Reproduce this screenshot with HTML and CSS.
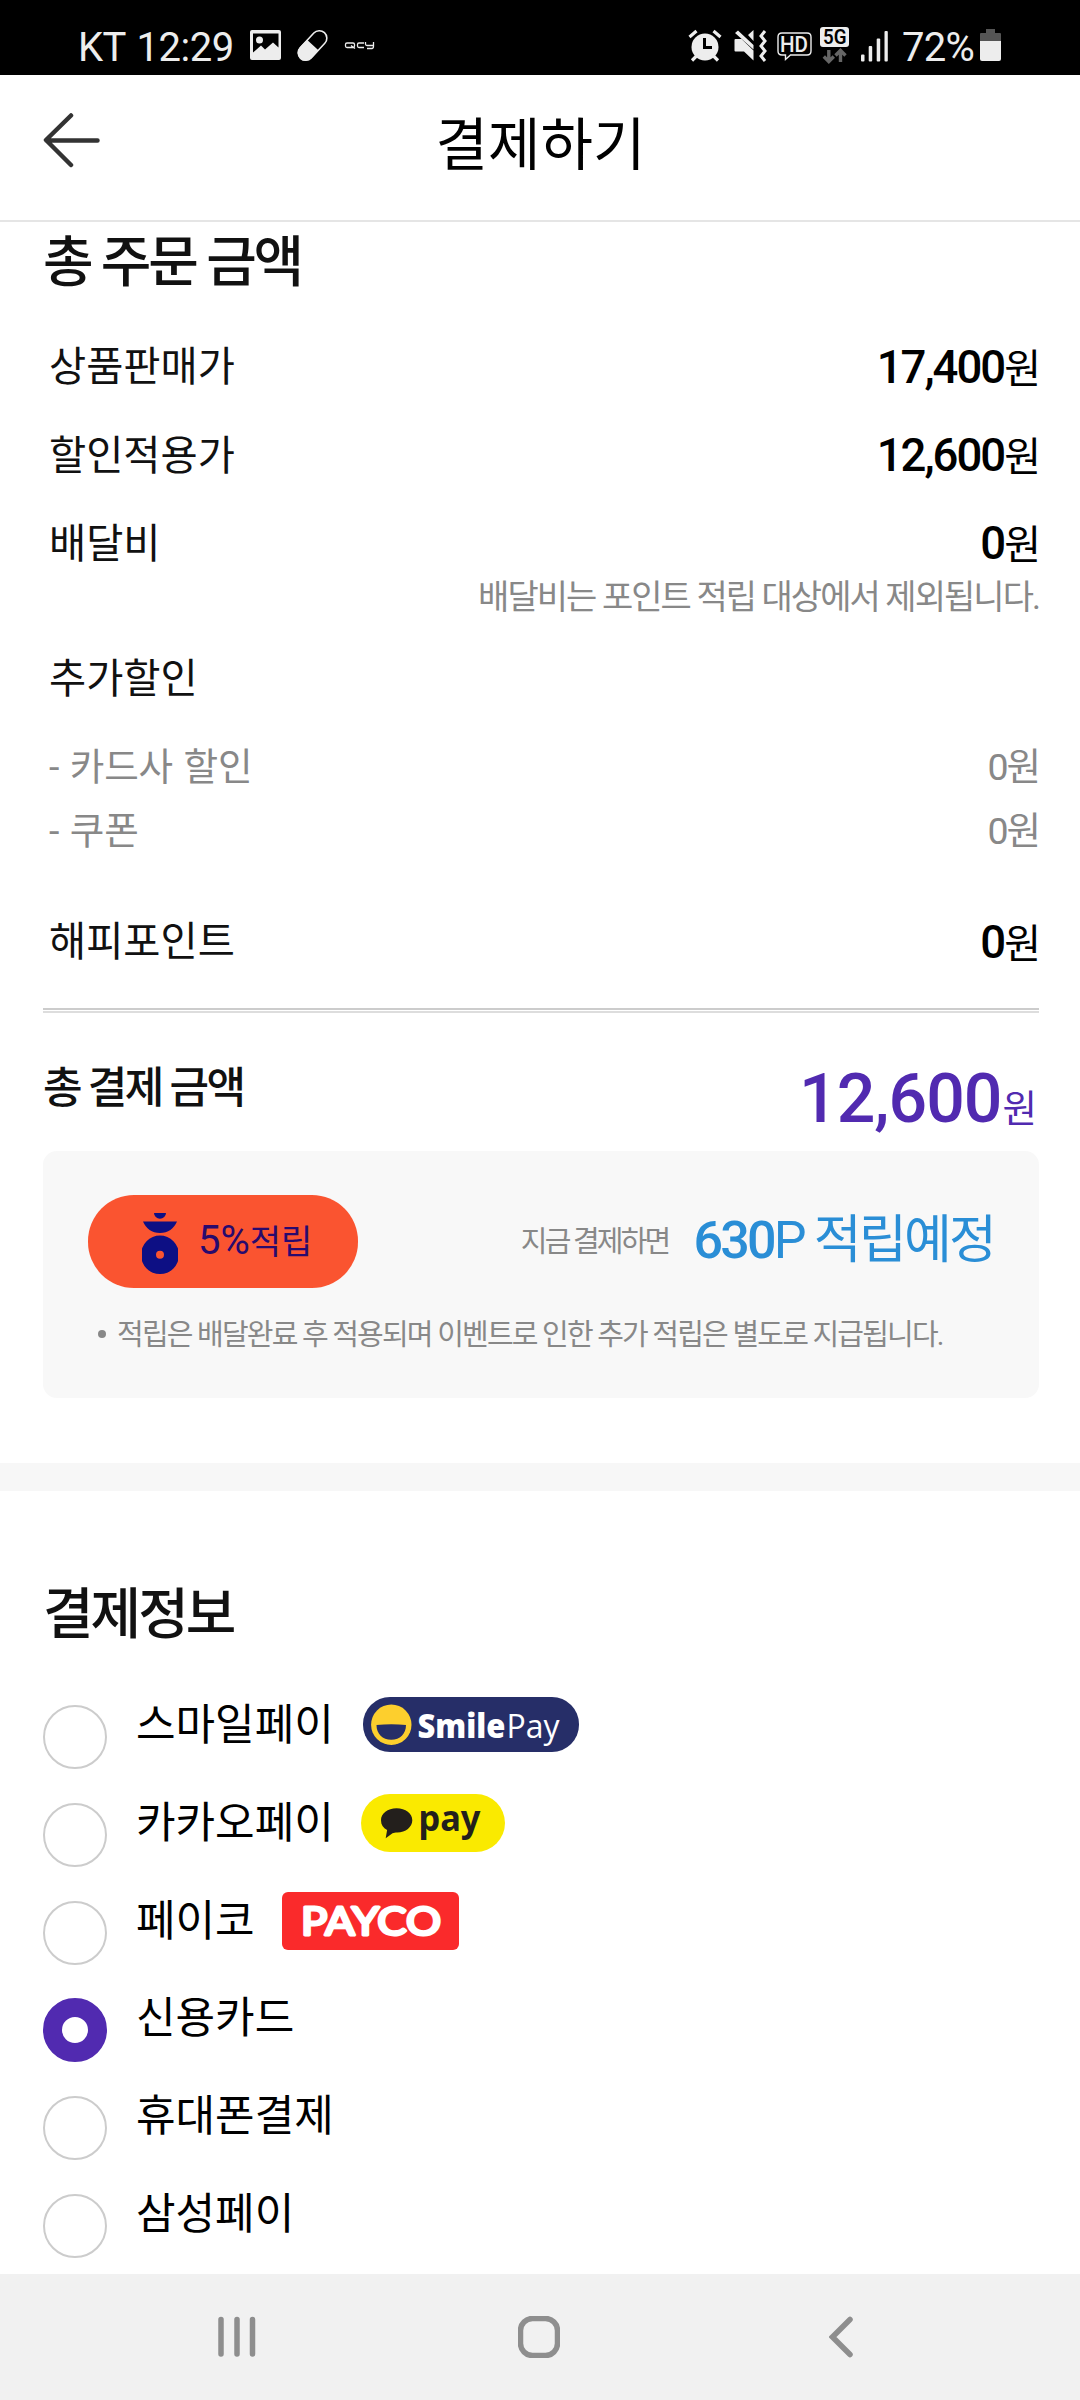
FILE: index.html
```html
<!DOCTYPE html>
<html lang="ko">
<head>
<meta charset="utf-8">
<title>결제하기</title>
<link rel="stylesheet" href="styles.css">
</head>
<body>
<div class="phone">
  <div class="status">
    <span class="status-text">KT 12:29</span>
    <svg class="status-left" width="130" height="36" viewBox="248 28 130 36">
      <path fill="#ededed" fill-rule="evenodd" d="M252 30h27q2 0 2 2v26q0 2-2 2h-27q-2 0-2-2v-26q0-2 2-2zM253 33.500v19l8-7 4 4 8-7 5.500 5v-14zM259.500 36.500a3.500 3.500 0 1 1 0 7a3.500 3.500 0 1 1 0-7z"/>
      <g transform="rotate(-47 312.500 45.500)">
        <rect x="295" y="38" width="35" height="15" rx="7.500" fill="none" stroke="#ededed" stroke-width="1.600"/>
        <path fill="#ededed" d="M313 37.500h-10.500a8 8 0 0 0 0 16h10.500z"/>
      </g>
      <path fill="none" stroke="#ededed" stroke-width="1.300" d="M347 43h6q1.500 0 1.500 1.500v1.500q0 1.500-1.500 1.500h-6q-1.500 0-1.500-1.500v-1.500q0-1.500 1.500-1.500zM351 45.500l4 3M364 43h-5q-1.500 0-1.500 1.500v1.500q0 1.500 1.500 1.500h5M365.500 42v2q0 1.500 1.500 1.500h6.500M373.500 42v4q0 2.500-1.500 2.500h-5"/>
    </svg>
    <svg class="status-right" width="202" height="40" viewBox="688 25 202 40">
      <g fill="#ededed">
        <circle cx="705" cy="47" r="13.500"/>
        <path fill="none" stroke="#ededed" stroke-width="3.200" d="M689.500 37l7-6M720.500 37l-7-6M692 60.500l5-5M718 60.500l-5-5"/>
        <path fill="none" stroke="#000" stroke-width="3" d="M704.500 38v9.500h7.500"/>
        <path d="M735.500 39h6l12 11.500v10l-9.500-9h-8.500q-1 0-1-1v-10.500q0-1 1-1zM735 33l3-2.500 15.500 14.500v4.500zM748 35l5.500-5v11z"/>
        <path fill="none" stroke="#ededed" stroke-width="3" d="M765 31l-4 5 4 5-4 5 4 5-4 5 4 5"/>
      </g>
      <path fill="none" stroke="#ededed" stroke-width="1.400" d="M782 33h25q4 0 4 4v14q0 4-4 4h-16.500l-5 4.500v-4.500h-3.500q-4 0-4-4v-14q0-4 4-4z"/>
      <text x="780" y="51.500" class="hd" textLength="28" lengthAdjust="spacingAndGlyphs">HD</text>
      <rect x="820" y="27" width="29" height="20" rx="3" fill="#ededed"/>
      <text x="823" y="44" class="five-g" textLength="23.500" lengthAdjust="spacingAndGlyphs">5G</text>
      <path fill="none" stroke="#666" stroke-width="3.400" d="M828.800 50v11M823.800 56.500l5 5 5-5M840.500 62v-11M835.500 55.500l5-5 5 5"/>
      <g fill="#ededed"><rect x="861" y="54.500" width="3.500" height="7" rx="1"/><rect x="868.700" y="46" width="3.500" height="15.500" rx="1"/><rect x="876.700" y="38.500" width="3.500" height="23" rx="1"/><rect x="884.500" y="31" width="3.300" height="30.500" rx="1"/></g>
    </svg>
    <span class="status-battery">72%</span>
    <svg class="battery" width="21" height="32" viewBox="0 0 21 32"><path fill="#555" d="M6 0h9v4h5q1 0 1 1v7h-21v-7q0-1 1-1h5z"/><path fill="#ededed" d="M0 12h21v18q0 2-2 2h-17q-2 0-2-2z"/></svg>
  </div>

  <header class="header">
    <svg class="back" width="58" height="58" viewBox="0 0 58 58"><path d="M28 4.500L3 29l25 25M3.500 29.500h51"/></svg>
    <h1 class="title">결제하기</h1>
  </header>

  <section class="order">
    <h2 class="heading">총 주문 금액</h2>
    <div class="row"><span>상품판매가</span><span class="price"><b>17,400</b>원</span></div>
    <div class="row"><span>할인적용가</span><span class="price"><b>12,600</b>원</span></div>
    <div class="row"><span>배달비</span><span class="price"><b>0</b>원</span></div>
    <p class="note">배달비는 포인트 적립 대상에서 제외됩니다.</p>
    <div class="row extra"><span>추가할인</span></div>
    <div class="row sub first"><span>- 카드사 할인</span><span class="price">0원</span></div>
    <div class="row sub"><span>- 쿠폰</span><span class="price">0원</span></div>
    <div class="row happy"><span>해피포인트</span><span class="price"><b>0</b>원</span></div>
    <div class="divider"></div>
    <div class="total"><span class="total-label">총 결제 금액</span><span class="total-price"><b>12,600</b>원</span></div>
    <div class="benefit">
      <div class="benefit-main">
        <div class="badge">
          <svg width="36" height="62" viewBox="0 0 36 62"><g fill="#0d0f84"><path d="M12 0h12a6 5.800 0 0 1-12 0zM1 8.500h34c-3 7-9 11.500-17 11.500s-14-4.500-17-11.500z"/><path fill-rule="evenodd" d="M18 22.500a19 19.300 0 0 1 0 38.600a19 19.300 0 0 1 0-38.600zM18 37.800a4 4 0 0 0 0 8a4 4 0 0 0 0-8z"/></g></svg>
          <span class="badge-text"><i>5%</i>적립</span>
        </div>
        <span class="benefit-when">지금 결제하면</span>
        <span class="benefit-point"><b>630</b>P 적립예정</span>
      </div>
      <p class="benefit-note"><span class="dot"></span>적립은 배달완료 후 적용되며 이벤트로 인한 추가 적립은 별도로 지급됩니다.</p>
    </div>
  </section>

  <section class="payment">
    <h2 class="heading">결제정보</h2>
    <ul class="methods">
      <li class="method"><span class="radio"></span><span class="name">스마일페이</span>
        <svg class="logo smile" width="216" height="55" viewBox="0 0 216 55"><rect width="216" height="55" rx="27" fill="#262e68"/><ellipse cx="28.300" cy="27.700" rx="20.200" ry="20.200" fill="#fdcf2d"/><path fill="#262e68" d="M13.500 28q15-1.500 29.500 0c0 9-6 14.700-14.700 14.700s-14.800-5.700-14.800-14.700z"/><text x="54.500" y="40.500" class="smile-bold" textLength="88" lengthAdjust="spacingAndGlyphs">Smile</text><text x="143.500" y="40.500" class="smile-thin" textLength="53" lengthAdjust="spacingAndGlyphs">Pay</text></svg></li>
      <li class="method"><span class="radio"></span><span class="name">카카오페이</span>
        <svg class="logo kakao" width="144" height="58" viewBox="0 0 144 58"><rect width="144" height="58" rx="29" fill="#faea00"/><path fill="#231f1c" d="M35.600 14.300c9 0 15.700 5.200 15.700 12s-6.700 12.200-15 12.200c-2 0-3.500.2-4.800.8l-6.800 5 1.400-8.300c-4-2-6.100-5.200-6.100-9.700 0-6.800 6.600-12 15.600-12z"/><text x="57.500" y="37.300" class="kakao-text" textLength="62" lengthAdjust="spacingAndGlyphs">pay</text></svg></li>
      <li class="method"><span class="radio"></span><span class="name">페이코</span>
        <svg class="logo payco" width="177" height="58" viewBox="0 0 177 58"><rect width="177" height="58" rx="6" fill="#fa2a2b"/><text x="19" y="43" class="payco-text" textLength="140" lengthAdjust="spacingAndGlyphs">PAYCO</text></svg></li>
      <li class="method"><span class="radio on"></span><span class="name">신용카드</span></li>
      <li class="method"><span class="radio"></span><span class="name">휴대폰결제</span></li>
      <li class="method"><span class="radio"></span><span class="name">삼성페이</span></li>
    </ul>
  </section>

  <nav class="navbar">
    <svg width="38" height="42" viewBox="0 0 38 42"><path d="M3 3.500v34.500M19 3.500v34.500M34.500 3.500v34.500"/></svg>
    <svg width="42" height="42" viewBox="0 0 42 42"><rect x="2.500" y="2.500" width="37" height="37" rx="12"/></svg>
    <svg width="24" height="42" viewBox="0 0 24 42"><path d="M21 3.500L3.500 21 21 38.500"/></svg>
  </nav>
</div>
</body>
</html>
```
FILE: styles.css
```css
* { box-sizing: border-box; margin: 0; padding: 0; }
body { background: #fff; }
b { font-weight: 500; }
.phone {
  width: 1080px; height: 2400px; overflow: hidden;
  display: flex; flex-direction: column;
  background: #fff; color: #111;
  font-family: Roboto, "Noto Sans CJK KR", sans-serif;
}
svg { display: block; flex: none; }

.status { height: 75px; background: #000; color: #ededed; display: flex; font-size: 40px; line-height: 47px; padding: 24px 0 0 78px; white-space: nowrap; }
.status-text { width: 170px; letter-spacing: -0.5px; word-spacing: 2px; }
.status-left { margin-top: 4px; }
.status-right { margin: 1px 0 0 310px; }
.status-battery { width: 77px; margin-left: 12px; letter-spacing: -0.7px; }
.battery { margin: 5px 0 0 1px; }
.hd { font: 500 22px Roboto, sans-serif; fill: #ededed; }
.five-g { font: 600 20px Roboto, sans-serif; fill: #000; }

.header { height: 147px; border-bottom: 2px solid #e5e5e5; display: flex; align-items: flex-start; padding: 36px 43px 0; }
.back { fill: none; stroke: #333; stroke-width: 4.5; stroke-linecap: round; stroke-linejoin: round; }
.title { flex: 1; margin: 2px 57px 0 0; text-align: center; font-size: 57px; font-weight: 400; line-height: 66px; color: #000; }

.order { height: 1241px; padding: 0 41px 0 43px; }
.heading { font-size: 55px; font-weight: 500; letter-spacing: -3px; line-height: 70px; color: #111; white-space: nowrap; }
.order .heading { padding-top: 5px; height: 102px; letter-spacing: -3.2px; }
.row { display: flex; justify-content: space-between; align-items: center; height: 88.3px; padding-left: 6px; font-size: 40.4px; line-height: 1; white-space: nowrap; }
.row > span:first-child { margin-top: 1px; }
.price { color: #000; font-size: 40px; letter-spacing: -2px; margin-top: -1px; }
.price b { font-size: 45.5px; }
.note { height: 24px; margin-top: -4px; line-height: 24px; font-size: 34px; letter-spacing: -1.95px; color: #888; text-align: right; white-space: nowrap; }
.extra { margin-top: 27px; }
.sub { height: 64px; font-size: 37.6px; letter-spacing: -0.2px; word-spacing: 1.5px; color: #888; }
.sub.first { margin-top: 11.5px; }
.sub .price { color: #888; font-size: 37.5px; margin-top: 0; }
.happy { margin-top: 35px; margin-bottom: 21px; }
.divider { height: 5px; border: solid #ccc; border-width: 2px 0; border-bottom-color: #ddd; }
.total { height: 138px; display: flex; justify-content: space-between; align-items: flex-start; white-space: nowrap; }
.total-label { margin-top: 50px; font-size: 43px; line-height: 50px; font-weight: 500; letter-spacing: -2.7px; }
.total-price { margin-top: 52px; padding-right: 2px; font-size: 37.5px; line-height: 68px; color: #512ab0; }
.total-price b { font-size: 68px; letter-spacing: -1px; margin-right: 1px; }

.benefit { height: 247px; border-radius: 14px; background: #f8f8f8; padding: 44px 45px 0; white-space: nowrap; }
.benefit-main { display: flex; align-items: center; height: 93px; }
.badge { width: 270px; height: 93px; border-radius: 46px; background: #fa5430; display: flex; align-items: center; padding-left: 54px; }
.badge svg { margin-top: 6px; }
.badge-text { margin: -1px 0 0 20px; font-size: 34px; color: #280a6e; line-height: 1; }
.badge-text i { font-style: normal; font-size: 40px; }
.benefit-when { margin: -4px 0 0 auto; font-size: 29px; letter-spacing: -2.8px; color: #888; }
.benefit-point { margin-left: 25px; font-size: 52px; letter-spacing: -2.8px; color: #2a8ed6; line-height: 1; }
.benefit-note { display: flex; align-items: center; margin-top: 24px; height: 40px; font-size: 29px; letter-spacing: -1.8px; color: #888; }
.dot { width: 8px; height: 8px; border-radius: 50%; background: #888; margin: 5px 11px 0 10px; }

.payment { border-top: 28px solid #f7f7f7; padding: 88px 43px 0; height: 811px; }
.methods { list-style: none; padding-top: 36px; }
.method { display: flex; align-items: flex-start; height: 97.8px; }
.radio { width: 64px; height: 64px; border: 2px solid #ccc; border-radius: 50%; margin-top: 20px; }
.radio.on { border: 19px solid #512ab0; }
.name { margin: 13px 0 0 29px; font-size: 43px; line-height: 54px; color: #000; white-space: nowrap; }
.logo { margin-top: 11px; }
.smile { margin: 12px 0 0 29px; }
.kakao { margin-left: 27px; }
.payco { margin-left: 27px; }
.smile-bold { font: 800 33px "Open Sans", sans-serif; fill: #fff; }
.smile-thin { font: 400 33px "Open Sans", sans-serif; fill: #fff; }
.kakao-text { font: 700 36px "Noto Sans", sans-serif; fill: #231f1c; }
.payco-text { font: 400 39.5px Lato, sans-serif; fill: #fff; stroke: #fff; stroke-width: 3; stroke-linejoin: round; }

.navbar { height: 126px; background: #f1f1f1; display: flex; padding: 42px 0 0 218px; }
.navbar svg { fill: none; stroke: #8e8e8e; stroke-width: 5.5; stroke-linecap: round; }
.navbar svg + svg { margin-left: 262px; }
.navbar svg:last-child { margin-left: 269px; }
```
